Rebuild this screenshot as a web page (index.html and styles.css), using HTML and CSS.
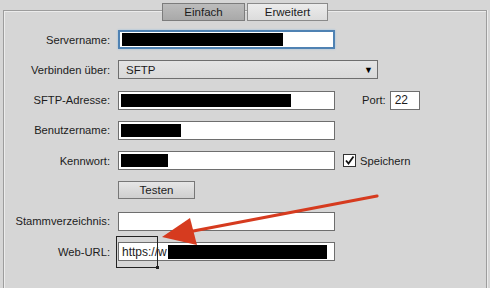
FILE: index.html
```html
<!DOCTYPE html>
<html lang="de">

<head>
    <meta charset="UTF-8">
    <title>Verbindung</title>
    <link rel="stylesheet" href="styles.css">
</head>

<body>
    <div class="tabs">
        <button class="tab active">Einfach</button>
        <button class="tab">Erweitert</button>
    </div>

    <div class="frame">
        <div class="form">
            <label class="lbl">Servername:</label>
            <div class="field focus"><span class="redact" style="width: 161px"></span></div>
            <div></div>

            <label class="lbl">Verbinden über:</label>
            <div class="select">
                <span>SFTP</span>
                <span class="arrow">&#9660;</span>
            </div>

            <label class="lbl">SFTP-Adresse:</label>
            <div class="field"><span class="redact" style="width: 170px"></span></div>
            <div class="extra port">
                <span>Port:</span>
                <div class="field small">22</div>
            </div>

            <label class="lbl">Benutzername:</label>
            <div class="field"><span class="redact" style="width: 60px"></span></div>
            <div></div>

            <label class="lbl">Kennwort:</label>
            <div class="field"><span class="redact" style="width: 47px"></span></div>
            <div class="extra">
                <span class="check">
                    <svg width="11" height="11" viewBox="0 0 11 11">
                        <path d="M2 5.5 L4.5 8.5 L9.5 1.5" fill="none" stroke="#111" stroke-width="1.8" />
                    </svg>
                </span>
                <span>Speichern</span>
            </div>

            <div></div>
            <div><button class="btn">Testen</button></div>
            <div></div>

            <label class="lbl">Stammverzeichnis:</label>
            <div class="field"></div>
            <div></div>

            <label class="lbl">Web-URL:</label>
            <div class="field url">
                <span class="txt">https://w</span>
                <span class="redact" style="width: 159px"></span>
                <span class="marker"><span class="handle"></span></span>
            </div>
            <div></div>
        </div>

        <!-- annotation arrow -->
        <svg class="annot" width="490" height="288" viewBox="0 0 490 288">
            <line x1="377" y1="196" x2="188" y2="232" stroke="#d63b1f" stroke-width="3.2" stroke-linecap="round" />
            <polygon points="162,237 190,218 197,245" fill="#d63b1f" />
        </svg>
    </div>
</body>

</html>
```

FILE: styles.css
```css
body {
    margin: 0;
    background-color: #d6d6d6;
    font-family: "Liberation Sans", Arial, sans-serif;
    font-size: 11px;
    color: #1c1c1c;
    width: 490px;
    height: 288px;
    overflow: hidden;
}

.tabs {
    display: flex;
    justify-content: center;
    gap: 2px;
    padding-top: 3px;
    position: relative;
    z-index: 1;
}

.tab {
    height: 18px;
    padding: 0;
    font-family: inherit;
    font-size: 11.5px;
    color: #1c1c1c;
    border: 1px solid #8a8a8a;
    background: linear-gradient(#ececec, #dcdcdc);
}

.tab:first-child {
    width: 83px;
}

.tab:last-child {
    width: 81px;
}

.tab.active {
    background: linear-gradient(#bcbcbc, #a9a9a9);
    border-color: #7c7c7c;
}

.frame {
    margin: -11px 3px 0 3px;
    height: 277px;
    border: 1px solid #9d9d9d;
    border-bottom: none;
    box-shadow: inset 1px 1px 0 #ececec, 1px 0 0 #ececec;
}

.form {
    display: grid;
    grid-template-columns: 106px 217px 1fr;
    grid-auto-rows: 19px;
    column-gap: 8px;
    row-gap: 11.3px;
    padding-top: 19px;
}

.lbl {
    display: flex;
    align-items: center;
    justify-content: flex-end;
    font-size: 11.2px;
}

.field {
    position: relative;
    box-sizing: border-box;
    height: 19px;
    background: #ffffff;
    border: 1px solid #6e6e6e;
    display: flex;
    align-items: center;
    padding: 0 2px;
    font-size: 12px;
}

.field.focus {
    border: 2px solid #4f82b3;
    box-shadow: 0 0 2px #9cc0e0;
    padding: 0 2px;
}

.redact {
    display: block;
    height: 13px;
    background: #000000;
}

.select {
    grid-column: 2 / 4;
    width: 260px;
    box-sizing: border-box;
    height: 19px;
    border: 1px solid #6e6e6e;
    background: linear-gradient(#e4e4e4, #d9d9d9);
    display: flex;
    align-items: center;
    justify-content: space-between;
    padding: 0 4px 0 7px;
    font-size: 11.5px;
}

.arrow {
    font-size: 9px;
    color: #000;
}

.extra {
    display: flex;
    align-items: center;
    gap: 4px;
    font-size: 11.2px;
}

.port {
    padding-left: 19px;
}

.field.small {
    width: 30px;
    padding-left: 4px;
}

.check {
    width: 13px;
    height: 13px;
    box-sizing: border-box;
    border: 1px solid #333;
    background: #fff;
    display: flex;
    align-items: center;
    justify-content: center;
}

.btn {
    width: 77px;
    height: 18px;
    padding: 0;
    font-family: inherit;
    font-size: 11.5px;
    color: #1c1c1c;
    border: 1px solid #777;
    background: linear-gradient(#e6e6e6, #cfcfcf);
}

.url .txt {
    margin-left: 1px;
    margin-right: 1px;
}

.url .redact {
    height: 14px;
}

.marker {
    position: absolute;
    left: -3px;
    top: -7px;
    width: 40px;
    height: 30px;
    border: 1px solid #222;
}

.handle {
    position: absolute;
    right: -2px;
    bottom: -2px;
    width: 3px;
    height: 3px;
    background: #222;
}

.annot {
    position: absolute;
    left: 0;
    top: 0;
    pointer-events: none;
}
```
